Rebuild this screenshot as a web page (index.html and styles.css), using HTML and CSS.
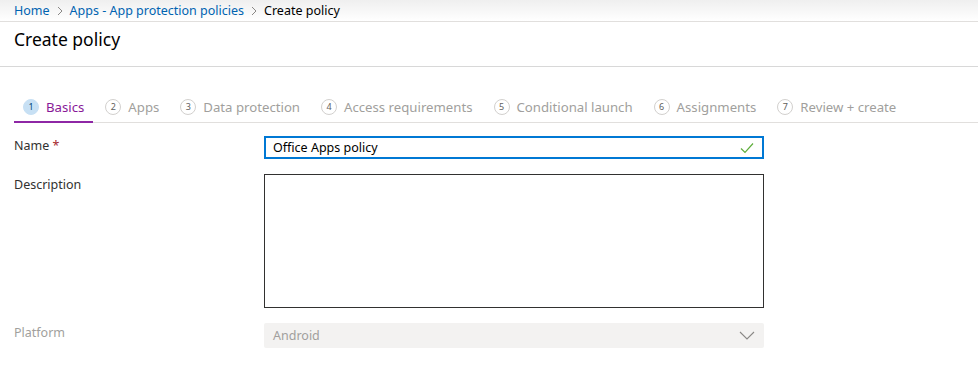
FILE: index.html
```html
<!DOCTYPE html>
<html lang="en">
<head>
  <meta charset="UTF-8">
  <title>Create policy</title>
  <link rel="stylesheet" href="styles.css">
</head>
<body>

  <div class="breadcrumb">
    <a href="#">Home</a>
    <svg class="sep" width="6" height="10" viewBox="0 0 6 10"><path d="M1 1 L5 5 L1 9" fill="none" stroke="#8a8886" stroke-width="1"/></svg>
    <a href="#">Apps - App protection policies</a>
    <svg class="sep" width="6" height="10" viewBox="0 0 6 10"><path d="M1 1 L5 5 L1 9" fill="none" stroke="#8a8886" stroke-width="1"/></svg>
    <span class="current">Create policy</span>
  </div>

  <div class="blade-header">
    <h1>Create policy</h1>
  </div>

  <div class="tabs">
    <div class="tab active"><span class="num">1</span>Basics</div>
    <div class="tab"><span class="num">2</span>Apps</div>
    <div class="tab"><span class="num">3</span>Data protection</div>
    <div class="tab"><span class="num">4</span>Access requirements</div>
    <div class="tab"><span class="num">5</span>Conditional launch</div>
    <div class="tab"><span class="num">6</span>Assignments</div>
    <div class="tab"><span class="num">7</span>Review + create</div>
  </div>

  <div class="form">
    <div class="row row-name">
      <label>Name <span class="req">*</span></label>
      <div class="field text-field">
        <span class="value">Office Apps policy</span>
        <svg class="check" width="14" height="12" viewBox="0 0 14 12"><path d="M1 6.5 L5 10.5 L13 1.5" fill="none" stroke="#5fae3c" stroke-width="1.2"/></svg>
      </div>
    </div>
    <div class="row row-desc">
      <label>Description</label>
      <div class="field textarea"></div>
    </div>
    <div class="row row-platform">
      <label class="disabled">Platform</label>
      <div class="field select">
        <span class="value">Android</span>
        <svg class="chevron" width="16" height="9" viewBox="0 0 16 9"><path d="M1 1 L8 8 L15 1" fill="none" stroke="#8a8886" stroke-width="1.1"/></svg>
      </div>
    </div>
  </div>

</body>
</html>
```

FILE: styles.css
```css
body {
  margin: 0;
  font-family: "Noto Sans", "Open Sans", sans-serif;
  color: #323130;
  background-color: #ffffff;
}

.breadcrumb {
  height: 21px;
  padding-left: 14px;
  display: flex;
  align-items: center;
  gap: 7px;
  font-size: 12.5px;
  background: linear-gradient(#efefef, #ffffff);
  border-bottom: 1px solid #e1dfdd;
}

.breadcrumb a {
  color: #0063b1;
  text-decoration: none;
}

.breadcrumb .current {
  color: #000000;
}

.blade-header {
  height: 44px;
  padding-left: 14px;
  border-bottom: 1px solid #d8d8d8;
}

.blade-header h1 {
  margin: 0;
  padding-top: 5px;
  font-size: 17.5px;
  font-weight: 400;
  color: #000000;
}

.tabs {
  display: flex;
  margin: 27px 0 0 14px;
  border-bottom: 1px solid #e1dfdd;
}

.tab {
  display: flex;
  align-items: center;
  height: 25px;
  padding: 0 9px 2px 9px;
  margin-right: 3px;
  font-size: 13.2px;
  color: #a19f9d;
  border-bottom: 2px solid transparent;
  margin-bottom: -1px;
}

.tab .num {
  width: 14px;
  height: 14px;
  border: 1px solid #d2d0ce;
  border-radius: 50%;
  font-size: 9px;
  display: flex;
  align-items: center;
  justify-content: center;
  margin-right: 7px;
  color: #605e5c;
}

.tab.active {
  color: #881798;
  border-bottom-color: #8e27a5;
}

.tab.active .num {
  background-color: #c7e0f4;
  border-color: #c7e0f4;
  color: #004578;
}

.form {
  padding: 13px 0 0 14px;
}

.row {
  display: flex;
}

.row label {
  width: 250px;
  font-size: 12.5px;
  padding-top: 1px;
}

.row label.disabled {
  color: #a19f9d;
}

.req {
  color: #a4262c;
}

.field {
  width: 500px;
  box-sizing: border-box;
}

.text-field {
  height: 23px;
  border: 2px solid #0078d4;
  display: flex;
  align-items: center;
  justify-content: space-between;
  padding: 0 8px 0 7px;
  font-size: 12.5px;
  color: #000000;
}

.row-desc {
  margin-top: 15px;
}

.row-desc label {
  padding-top: 2px;
}

.textarea {
  height: 134px;
  border: 1px solid #323130;
}

.row-platform {
  margin-top: 15px;
}

.select {
  height: 25px;
  background-color: #f3f2f1;
  border-radius: 2px;
  display: flex;
  align-items: center;
  justify-content: space-between;
  padding: 0 9px 0 9px;
  font-size: 12.5px;
  color: #a19f9d;
}
```
